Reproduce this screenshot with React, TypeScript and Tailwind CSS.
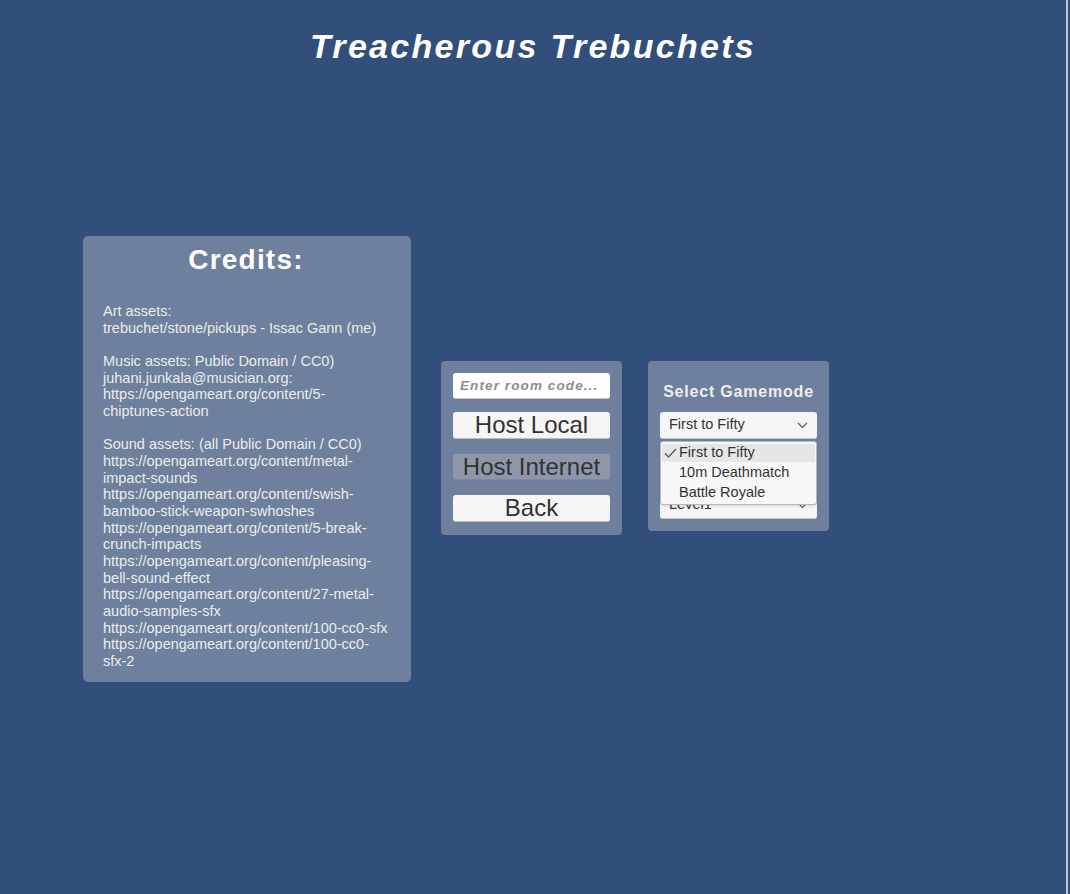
import React from 'react';

const creditLines = [
  'Art assets:',
  'trebuchet/stone/pickups - Issac Gann (me)',
  '',
  'Music assets: Public Domain / CC0)',
  'juhani.junkala@musician.org:',
  'https://opengameart.org/content/5-chiptunes-action',
  '',
  'Sound assets: (all Public Domain / CC0)',
  'https://opengameart.org/content/metal-impact-sounds',
  'https://opengameart.org/content/swish-bamboo-stick-weapon-swhoshes',
  'https://opengameart.org/content/5-break-crunch-impacts',
  'https://opengameart.org/content/pleasing-bell-sound-effect',
  'https://opengameart.org/content/27-metal-audio-samples-sfx',
  'https://opengameart.org/content/100-cc0-sfx',
  'https://opengameart.org/content/100-cc0-sfx-2',
];

const gamemodes = ['First to Fifty', '10m Deathmatch', 'Battle Royale'];

function Chevron() {
  return (
    <svg width="11" height="7" viewBox="0 0 11 7" className="shrink-0">
      <path d="M1 1 L5.5 5.5 L10 1" fill="none" stroke="#5a5a5a" strokeWidth="1.1" />
    </svg>
  );
}

function Check() {
  return (
    <svg width="13" height="10" viewBox="0 0 13 10" className="shrink-0">
      <path d="M1 5.5 L4.5 9 L12 1" fill="none" stroke="#444" strokeWidth="1.1" />
    </svg>
  );
}

function MenuButton({ label, disabled }: { label: string; disabled?: boolean }) {
  return (
    <button
      type="button"
      className={
        disabled
          ? 'h-[26px] w-full rounded-[3px] bg-[#8e97aa] border-b border-[#7f889c] text-[24px] leading-none text-[#323232]'
          : 'h-[27px] w-full rounded-[3px] bg-[#f5f5f5] border-b border-[#bdbdbd] text-[24px] leading-none text-[#323232]'
      }
    >
      {label}
    </button>
  );
}

export default function App() {
  return (
    <div className="flex h-[894px] w-full bg-[#324e7a] font-['Liberation_Sans',Arial,sans-serif]">
      <div className="flex flex-1 flex-col">
        <h1 className="pt-[29px] text-center text-[34px] font-bold italic leading-none tracking-[2.3px] text-white">
          Treacherous Trebuchets
        </h1>

        <div className="mt-[173px] flex items-start pl-[83px]">
          {/* Credits */}
          <div className="h-[446px] w-[328px] rounded-[5px] bg-[#6e809d] pl-[20px] pr-[22px] pt-[10px]">
            <h2 className="text-center text-[28px] font-bold leading-none tracking-[1.2px] text-white">
              Credits:
            </h2>
            <div className="mt-[29px] text-[14.5px] leading-[16.67px] text-[#ececec]">
              {creditLines.map((line, i) => (
                <div key={i} className="min-h-[16.67px]">
                  {line}
                </div>
              ))}
            </div>
          </div>

          {/* Host / join */}
          <div className="ml-[30px] mt-[125px] flex w-[181px] flex-col rounded-[4px] bg-[#6e809d] p-[12px]">
            <input
              placeholder="Enter room code..."
              className="h-[26px] w-full rounded-[3px] border-b border-[#c4c4c4] bg-white px-[7px] text-[13.5px] font-bold italic tracking-[1.1px] text-[#333] outline-none placeholder:text-[#8d8d8d]"
            />
            <div className="mt-[13px]">
              <MenuButton label="Host Local" />
            </div>
            <div className="mt-[14px]">
              <MenuButton label="Host Internet" disabled />
            </div>
            <div className="mt-[13px]">
              <MenuButton label="Back" />
            </div>
          </div>

          {/* Gamemode */}
          <div className="ml-[26px] mt-[125px] flex w-[181px] flex-col rounded-[4px] bg-[#6e809d] px-[12px] pb-[12px] pt-[23px]">
            <div className="text-center text-[16px] font-bold leading-[16px] tracking-[0.8px] text-[#eeeeee]">
              Select Gamemode
            </div>
            <div className="relative mt-[12px]">
              <div className="flex h-[27px] items-center justify-between rounded-[3px] border-b border-[#c4c4c4] bg-[#f5f5f5] pl-[9px] pr-[9px] text-[14.5px] text-[#333]">
                <span>First to Fifty</span>
                <Chevron />
              </div>
              <div className="absolute left-0 right-0 top-[29px] z-10 h-[64px] rounded-[3px] border border-[#b8b8b8] bg-[#f7f7f7] px-[1px] pt-[2px] shadow-sm">
                {gamemodes.map((mode, i) => (
                  <div
                    key={mode}
                    className={
                      i === 0
                        ? 'flex h-[18px] items-center bg-[#e6e6e6] pl-[2px] text-[14.5px] text-[#333]'
                        : 'mt-[2px] flex h-[18px] items-center pl-[17px] text-[14.5px] text-[#333]'
                    }
                  >
                    {i === 0 && <Check />}
                    <span className={i === 0 ? 'ml-[2px]' : ''}>{mode}</span>
                  </div>
                ))}
              </div>
            </div>
            <div className="h-[53px]" />
            <div className="flex h-[27px] items-center justify-between rounded-[3px] border-b border-[#c4c4c4] bg-[#f5f5f5] pl-[9px] pr-[9px] text-[14.5px] text-[#333]">
              <span>Level1</span>
              <Chevron />
            </div>
          </div>
        </div>
      </div>
      <div className="w-[2px] bg-[#c6c6da]" />
      <div className="w-[2px]" />
    </div>
  );
}
